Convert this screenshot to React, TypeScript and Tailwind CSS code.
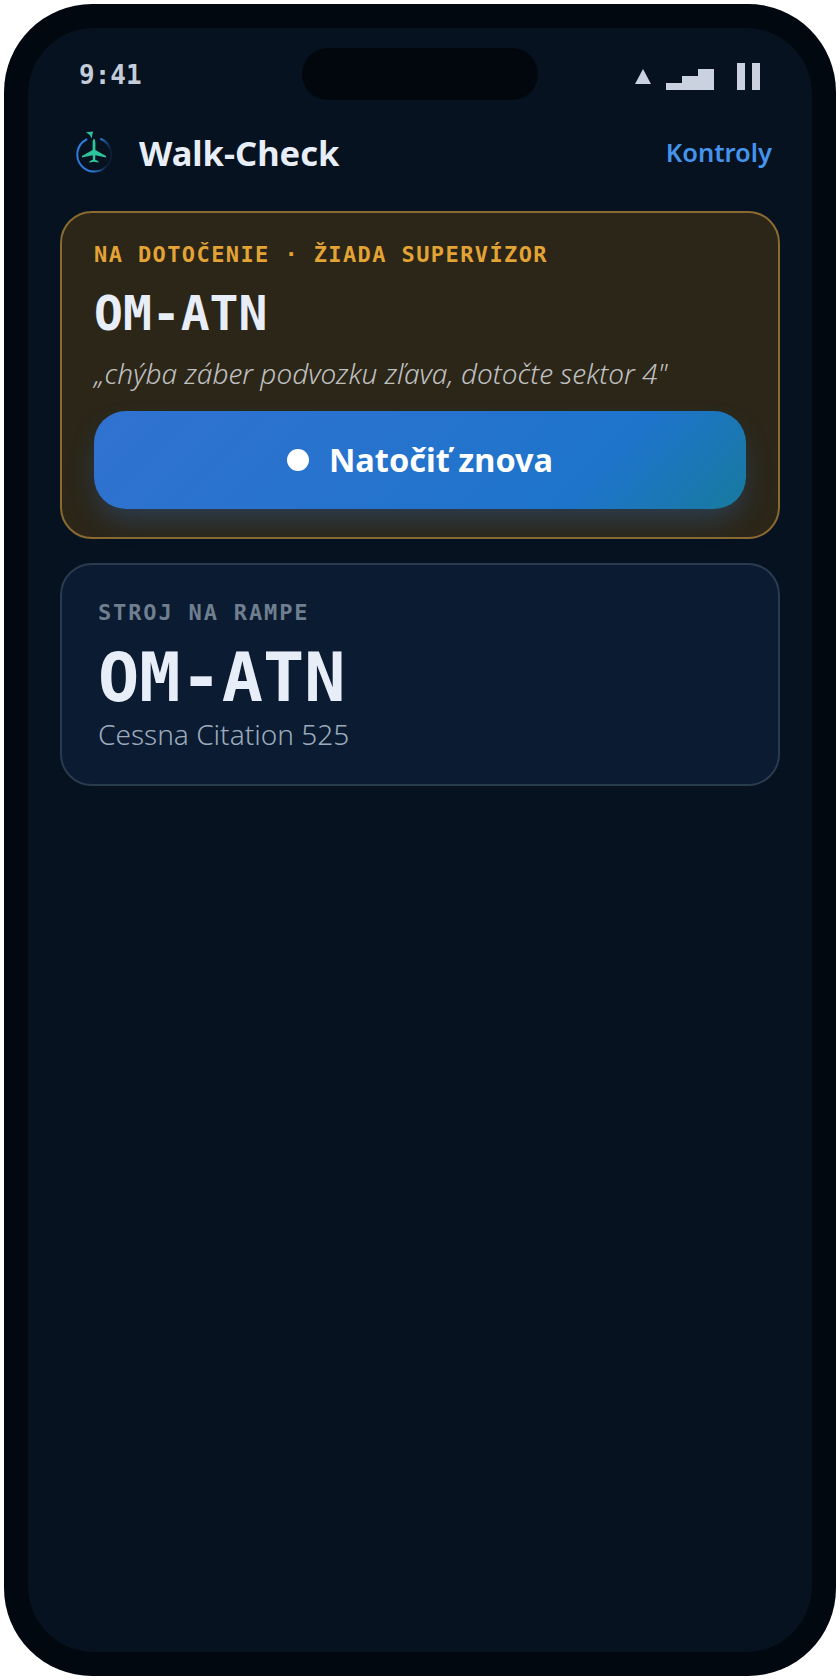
const MONO = "font-['DejaVu_Sans_Mono',monospace]"

function Logo() {
  return (
    <svg viewBox="0 0 40 42" className="w-[40px] h-[42px] shrink-0">
      <defs>
        <linearGradient id="ring" x1="0" y1="0" x2="1" y2="0.2">
          <stop offset="0" stopColor="#2a7de1" />
          <stop offset="0.65" stopColor="#2a78d8" />
          <stop offset="1" stopColor="#0b1c34" />
        </linearGradient>
      </defs>
      <path
        d="M12.5 8.5 A17 17 0 1 0 27 8"
        fill="none"
        stroke="url(#ring)"
        strokeWidth="2"
        strokeLinecap="round"
      />
      <path d="M12 1.2 L19 0.6 L17.6 7.4 L15.8 4 Z" fill="#2dc49a" />
      <path
        d="M20 8 C20.9 8 21.4 10 21.4 12 L21.4 19 L32 25 L32 26.6 L21.4 24.2 L21.1 28.6 L24.6 30.6 L24.6 31.6 L20 30.8 L15.4 31.6 L15.4 30.6 L18.9 28.6 L18.6 24.2 L8 26.6 L8 25 L18.6 19 L18.6 12 C18.6 10 19.1 8 20 8 Z"
        fill="#2dc49a"
      />
    </svg>
  )
}

function StatusIcons() {
  return (
    <div className="flex items-end">
      <div className="w-0 h-0 mb-[6px] border-x-[8px] border-x-transparent border-b-[15px] border-b-[#c9d2de]" />
      <div className="flex items-end ml-[15px]">
        <div className="w-[16px] h-[7px] bg-[#c9d2de]" />
        <div className="w-[16px] h-[14px] bg-[#c9d2de]" />
        <div className="w-[16px] h-[21px] bg-[#c9d2de]" />
      </div>
      <div className="flex gap-[7px] ml-[23px]">
        <div className="w-[8px] h-[27px] bg-[#c9d2de]" />
        <div className="w-[8px] h-[27px] bg-[#c9d2de]" />
      </div>
    </div>
  )
}

export default function App() {
  return (
    <div className="w-[840px] h-[1680px] bg-white p-[4px] font-['Noto_Sans',sans-serif]">
      <div className="h-full rounded-[88px] bg-[#020810] p-[24px]">
        <div className="relative h-full rounded-[66px] bg-[#06121f] px-[32px] overflow-hidden">
          <div className="absolute left-[274px] top-[20px] w-[236px] h-[52px] rounded-full bg-[#02070e]" />

          <div className="flex items-end justify-between h-[62px] pl-[19px] pr-[20px]">
            <span className={`${MONO} text-[26px] leading-[30px] font-bold text-[#c3ccd8]`}>9:41</span>
            <StatusIcons />
          </div>

          <div className="flex items-center justify-between mt-[36px] h-[54px]">
            <div className="flex items-center">
              <div className="ml-[14px] -mt-[3px]">
                <Logo />
              </div>
              <span className="ml-[25px] text-[34.5px] leading-none font-bold text-[#e8eef8]">Walk-Check</span>
            </div>
            <span className="pr-[8px] text-[25.5px] leading-none font-semibold text-[#4593ea]">Kontroly</span>
          </div>

          <div className="mt-[31px] rounded-[32px] border-2 border-[#8a6a30] bg-[#2b2618] pt-[28px] pb-[28px] px-[32px]">
            <div className={`${MONO} text-[22px] leading-[28px] font-bold tracking-[1.4px] text-[#e3a335]`}>
              NA DOTOČENIE · ŽIADA SUPERVÍZOR
            </div>
            <div className={`${MONO} mt-[15px] text-[48px] leading-[58px] font-bold text-[#e8eef8]`}>OM-ATN</div>
            <div className="mt-[13px] text-[28px] leading-[36px] italic font-light text-[#c0c0c0]">
              „chýba záber podvozku zľava, dotočte sektor 4"
            </div>
            <div className="mt-[20px] flex h-[98px] items-center justify-center gap-[20px] rounded-[32px] bg-linear-[135deg,#3172d0_0%,#1e74cb_75%,#187a9f_100%] shadow-[0_14px_28px_-4px_rgba(47,114,207,0.32)]">
              <div className="h-[22px] w-[22px] rounded-full bg-white" />
              <span className="text-[32.5px] leading-none font-bold text-white">Natočiť znova</span>
            </div>
          </div>

          <div className="mt-[24px] rounded-[32px] border-2 border-[#2b3b4f] bg-[#0b1b32] pt-[34px] pb-[32px] px-[36px]">
            <div className={`${MONO} text-[22px] leading-[28px] font-bold tracking-[1.85px] text-[#6f7f90]`}>
              STROJ NA RAMPE
            </div>
            <div className={`${MONO} mt-[12px] text-[68.5px] leading-[76px] font-bold text-[#e8eef8]`}>OM-ATN</div>
            <div className="mt-[1px] text-[28px] leading-[36px] font-light text-[#9dabbc]">Cessna Citation 525</div>
          </div>
        </div>
      </div>
    </div>
  )
}
